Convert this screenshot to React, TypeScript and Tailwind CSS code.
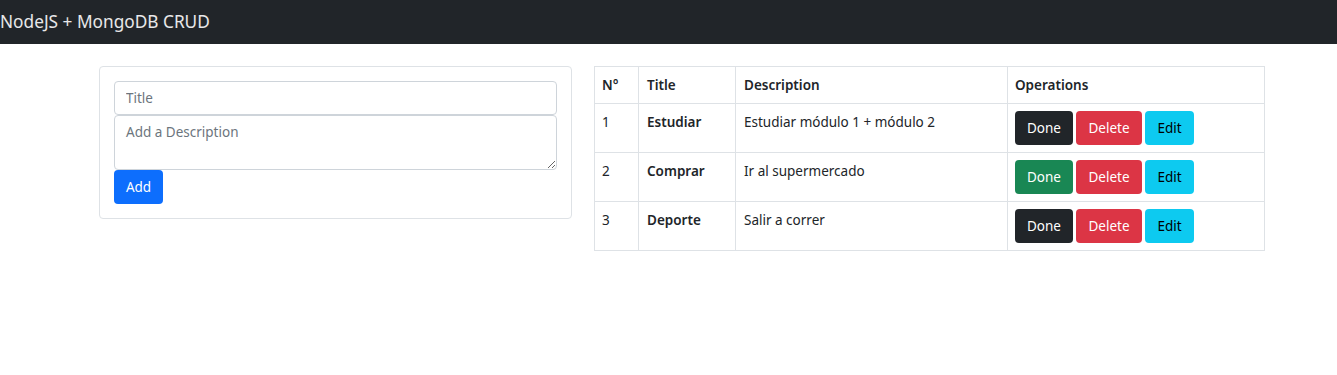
import React from "react";

const rows = [
  { n: 1, title: "Estudiar", desc: "Estudiar módulo 1 + módulo 2", done: false },
  { n: 2, title: "Comprar", desc: "Ir al supermercado", done: true },
  { n: 3, title: "Deporte", desc: "Salir a correr", done: false },
];

export default function App() {
  return (
    <div className="min-h-[375px] bg-white text-[#212529] text-[13.5px]" style={{ fontFamily: '"Noto Sans", sans-serif' }}>
      <nav className="h-[44px] bg-[#212529] flex items-center pb-[1px]">
        <span className="text-[17.25px] text-white/90 leading-none">NodeJS + MongoDB CRUD</span>
      </nav>
      <div className="flex gap-[22px] pl-[99px] pt-[22px] items-start">
        <div className="w-[473px] border border-[#dee2e6] rounded-[4px] p-[14px]">
          <input
            placeholder="Title"
            className="block w-full h-[34px] border border-[#ced4da] rounded-[4px] px-[11px] text-[13.5px] placeholder:text-[#6c757d] outline-none"
          />
          <textarea
            placeholder="Add a Description"
            className="block w-full h-[55px] border border-[#ced4da] rounded-[4px] px-[11px] py-[6px] text-[13.5px] placeholder:text-[#6c757d] outline-none"
          />
          <button className="h-[34px] w-[49px] bg-[#0d6efd] text-white rounded-[4px] text-[13.5px]">Add</button>
        </div>
        <table className="w-[671px] border-collapse border border-[#dee2e6]">
          <thead>
            <tr className="h-[37px]">
              <th className="w-[44px] border border-[#dee2e6] px-[7px] text-left font-semibold">N°</th>
              <th className="w-[97px] border border-[#dee2e6] px-[8px] text-left font-semibold">Title</th>
              <th className="w-[272px] border border-[#dee2e6] px-[8px] text-left font-semibold">Description</th>
              <th className="border border-[#dee2e6] px-[7px] text-left font-semibold">Operations</th>
            </tr>
          </thead>
          <tbody>
            {rows.map((r) => (
              <tr key={r.n} className="h-[49px]">
                <td className="border border-[#dee2e6] px-[7px] pt-[8px] pb-[7px] align-top">{r.n}</td>
                <td className="border border-[#dee2e6] px-[8px] pt-[8px] pb-[7px] align-top font-semibold">{r.title}</td>
                <td className="border border-[#dee2e6] px-[8px] pt-[8px] pb-[7px] align-top">{r.desc}</td>
                <td className="border border-[#dee2e6] px-[7px] py-[7px] align-top">
                  <div className="flex gap-[3px]">
                    <button className={`h-[34px] w-[58px] rounded-[4px] text-white ${r.done ? "bg-[#198754]" : "bg-[#212529]"}`}>Done</button>
                    <button className="h-[34px] w-[66px] rounded-[4px] text-white bg-[#dc3545]">Delete</button>
                    <button className="h-[34px] w-[49px] rounded-[4px] text-black bg-[#0dcaf0]">Edit</button>
                  </div>
                </td>
              </tr>
            ))}
          </tbody>
        </table>
      </div>
    </div>
  );
}
